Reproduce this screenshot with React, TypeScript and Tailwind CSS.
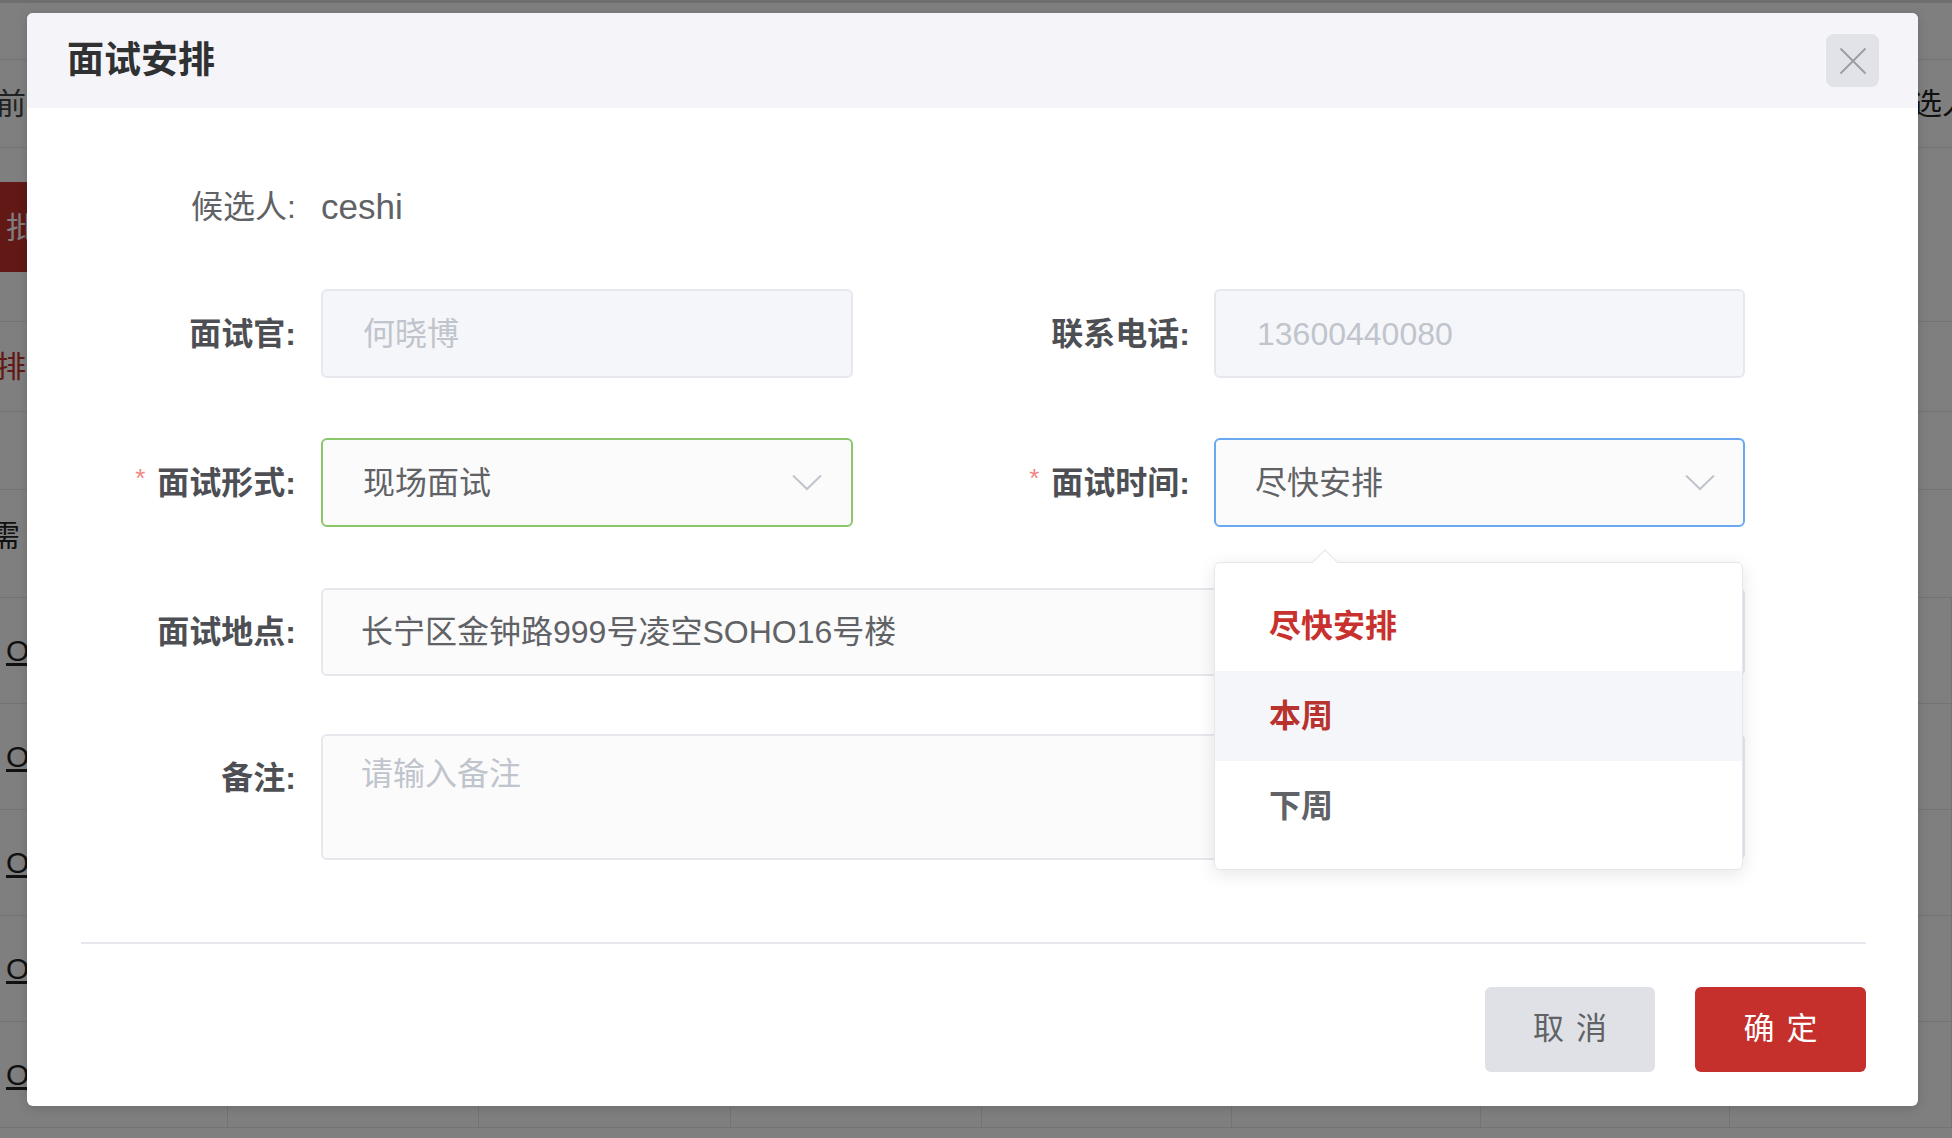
import React from "react";

function Chevron() {
  return (
    <svg width="30" height="17" viewBox="0 0 30 17" fill="none">
      <path d="M1 1.5L15 15L29 1.5" stroke="#c0c4cc" strokeWidth="2" />
    </svg>
  );
}

function CloseIcon() {
  return (
    <svg width="28" height="28" viewBox="0 0 28 28" fill="none">
      <path d="M1.5 1.5L26.5 26.5M26.5 1.5L1.5 26.5" stroke="#9a9ca3" strokeWidth="1.8" />
    </svg>
  );
}

function Label({
  children,
  required,
  width,
  height,
}: {
  children: React.ReactNode;
  required?: boolean;
  width: string;
  height: string;
}) {
  return (
    <div
      className={`flex shrink-0 items-center justify-end text-[32px] font-bold text-[#4d4f54] ${width} ${height}`}
    >
      {required && (
        <span className="mr-[12px] mt-[-8px] text-[26px] font-normal text-[#f08585]">*</span>
      )}
      {children}
    </div>
  );
}

function Background() {
  const cols = ["w-[228px]", "w-[251px]", "w-[252px]", "w-[251px]", "w-[250px]", "w-[249px]", "w-[249px]", "w-[222px]"];
  const linkRow = (k: number) => (
    <div key={k} className="flex h-[106px] border-b border-[#e6e6e6]">
      {cols.map((c, i) => (
        <div key={i} className={`${c} flex items-center border-r border-[#e6e6e6]`}>
          {i === 0 && (
            <span className="ml-[6px] text-[30px] text-[#222] underline">OD20230{k}</span>
          )}
        </div>
      ))}
    </div>
  );
  return (
    <div className="flex h-full w-full flex-col bg-white font-['Liberation_Sans','Noto_Sans_CJK_SC',sans-serif]">
      <div className="h-[3px] bg-[#dcdcdc]" />
      <div className="h-[57px] border-b border-[#e6e6e6]" />
      <div className="flex h-[88px] items-center justify-between border-b border-[#e6e6e6]">
        <span className="ml-[-4px] text-[30px] text-[#444]">前</span>
        <span className="mr-[-20px] text-[30px] text-[#222]">选人</span>
      </div>
      <div className="h-[34px]" />
      <div className="flex h-[90px] w-[300px] items-center bg-[#c4302b]">
        <span className="ml-[6px] text-[30px] text-white">批</span>
      </div>
      <div className="h-[50px] border-b border-[#e6e6e6]" />
      <div className="flex h-[90px] items-center border-b border-[#e6e6e6]">
        <span className="ml-[-4px] text-[30px] text-[#c4302b]">排</span>
      </div>
      <div className="h-[78px] border-b border-[#e6e6e6]" />
      <div className="flex h-[90px] items-center">
        <span className="ml-[-10px] text-[30px] text-[#222]">需</span>
      </div>
      <div className="h-[18px] border-b border-[#e6e6e6]" />
      {[1, 2, 3, 4, 5].map((k) => linkRow(k))}
    </div>
  );
}

export default function App() {
  return (
    <div className="relative h-[1138px] w-[1952px] overflow-hidden font-['Liberation_Sans','Noto_Sans_CJK_SC',sans-serif]">
      <Background />
      <div className="absolute inset-0 bg-black/50" />

      <div className="absolute left-[27px] top-[13px] flex h-[1093px] w-[1891px] flex-col rounded-[6px] bg-white shadow-[0_2px_12px_rgba(0,0,0,0.15)]">
        {/* Header */}
        <div className="flex h-[95px] shrink-0 items-center justify-between rounded-t-[6px] bg-[#f4f4f9] pl-[40px] pr-[39px]">
          <div className="text-[37px] font-bold text-[#303133]">面试安排</div>
          <div className="flex h-[53px] w-[53px] items-center justify-center rounded-[8px] bg-[#e1e3e9]">
            <CloseIcon />
          </div>
        </div>

        {/* Candidate */}
        <div className="mt-[69px] flex h-[60px] items-center">
          <div className="flex w-[269px] shrink-0 justify-end text-[32px] text-[#606266]">候选人:</div>
          <div className="ml-[25px] text-[35px] text-[#606266]">ceshi</div>
        </div>

        {/* Interviewer / Phone */}
        <div className="mt-[52px] flex">
          <Label width="w-[269px]" height="h-[89px]">面试官:</Label>
          <div className="ml-[25px] flex h-[89px] w-[532px] items-center rounded-[6px] border-2 border-[#e6e8ee] bg-[#f5f6f9] pl-[40px] text-[32px] text-[#c0c4cc]">
            何晓博
          </div>
          <Label width="w-[337px]" height="h-[89px]">联系电话:</Label>
          <div className="ml-[24px] flex h-[89px] w-[531px] items-center rounded-[6px] border-2 border-[#e6e8ee] bg-[#f5f6f9] pl-[41px] text-[32px] text-[#c0c4cc]">
            13600440080
          </div>
        </div>

        {/* Form / Time */}
        <div className="mt-[60px] flex">
          <Label width="w-[269px]" height="h-[89px]" required>
            面试形式:
          </Label>
          <div className="ml-[25px] flex h-[89px] w-[532px] items-center justify-between rounded-[6px] border-2 border-[#8cc66b] bg-[#fbfbfb] pl-[40px] pr-[29px] text-[32px] text-[#606266]">
            <span>现场面试</span>
            <Chevron />
          </div>
          <Label width="w-[337px]" height="h-[89px]" required>
            面试时间:
          </Label>
          <div className="relative ml-[24px] w-[531px]">
            <div className="flex h-[89px] w-full items-center justify-between rounded-[6px] border-2 border-[#6aa9f2] bg-[#fbfbfb] pl-[39px] pr-[28px] text-[32px] text-[#606266]">
              <span>尽快安排</span>
              <Chevron />
            </div>
            {/* Dropdown */}
            <div className="absolute left-0 top-[124px] z-10 w-[529px] rounded-[6px] border border-[#e4e7ed] bg-white py-[18px] shadow-[0_4px_18px_rgba(0,0,0,0.10)]">
              <div className="absolute left-[101px] top-[-10px] h-[18px] w-[18px] rotate-45 border-l border-t border-[#e4e7ed] bg-white" />
              <div className="relative flex h-[90px] items-center pl-[54px] text-[32px] font-bold text-[#c8312e]">
                尽快安排
              </div>
              <div className="relative flex h-[90px] items-center bg-[#f5f6fa] pl-[54px] text-[32px] font-bold text-[#b8322e]">
                本周
              </div>
              <div className="relative flex h-[90px] items-center pl-[54px] text-[32px] font-bold text-[#606266]">
                下周
              </div>
            </div>
          </div>
        </div>

        {/* Location */}
        <div className="mt-[61px] flex">
          <Label width="w-[269px]" height="h-[88px]">面试地点:</Label>
          <div className="ml-[25px] flex h-[88px] w-[1424px] items-center rounded-[6px] border-2 border-[#e6e8ee] bg-[#fbfbfb] pl-[38px] text-[32px] text-[#606266]">
            长宁区金钟路999号凌空SOHO16号楼
          </div>
        </div>

        {/* Remarks */}
        <div className="mt-[58px] flex items-start">
          <Label width="w-[269px]" height="h-[88px]">备注:</Label>
          <div className="ml-[25px] h-[126px] w-[1424px] rounded-[6px] border-2 border-[#e6e8ee] bg-[#fbfbfb] pl-[38px] pt-[14px] text-[32px] leading-[48px] text-[#c0c4cc]">
            请输入备注
          </div>
        </div>

        {/* Divider */}
        <div className="ml-[54px] mr-[52px] mt-[82px] h-[2px] bg-[#e6e8ee]" />

        {/* Footer */}
        <div className="mt-[43px] flex justify-end gap-[40px] pr-[52px]">
          <div className="flex h-[85px] w-[170px] items-center justify-center gap-[12px] rounded-[6px] bg-[#dfe1e6] text-[31px] text-[#606266]">
            <span>取</span>
            <span>消</span>
          </div>
          <div className="flex h-[85px] w-[171px] items-center justify-center gap-[12px] rounded-[6px] bg-[#c5302c] text-[31px] text-white">
            <span>确</span>
            <span>定</span>
          </div>
        </div>
      </div>
    </div>
  );
}
